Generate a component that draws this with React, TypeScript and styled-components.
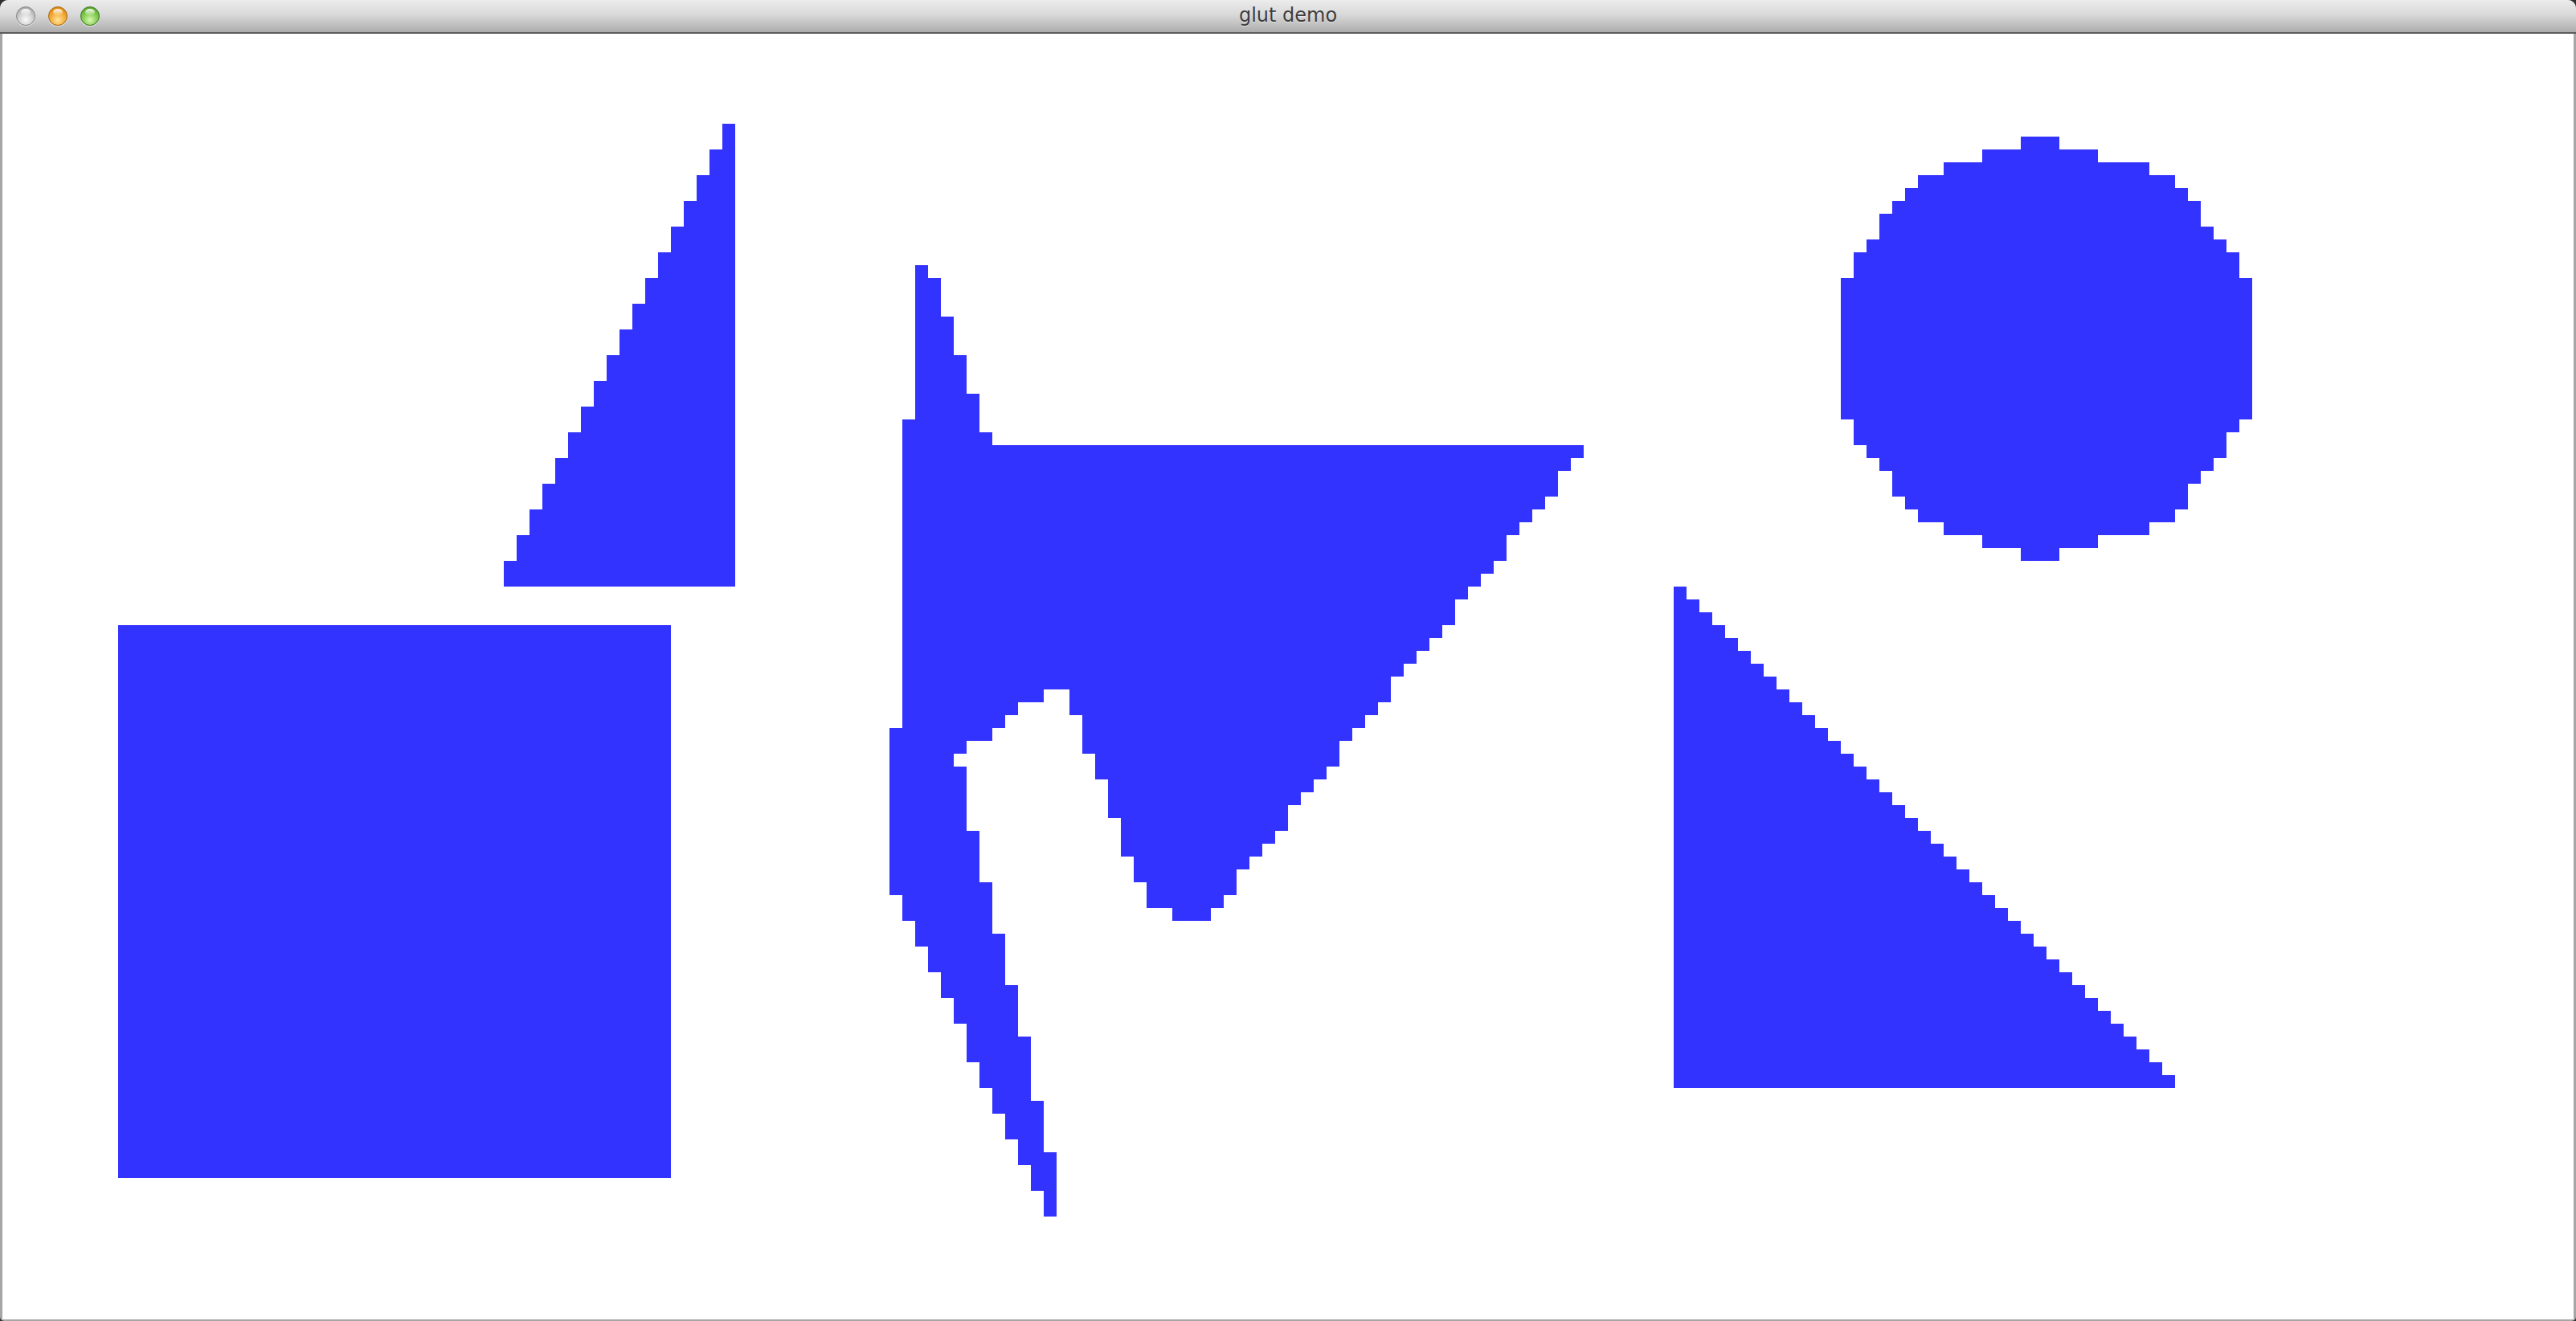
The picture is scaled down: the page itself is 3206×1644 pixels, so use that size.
import React from "react";
import styled, { createGlobalStyle } from "styled-components";

const GlobalStyle = createGlobalStyle`
  html, body {
    margin: 0;
    padding: 0;
    background: #2e2e2e;
    overflow: hidden;
  }
  #root {
    width: 3206px;
    height: 1644px;
  }
`;

const Window = styled.div`
  width: 3206px;
  height: 1644px;
  box-sizing: border-box;
  display: flex;
  flex-direction: column;
  background: #a6a6a6;
  border-radius: 10px 10px 5px 5px;
  overflow: hidden;
`;

const TitleBar = styled.div`
  height: 40px;
  flex: 0 0 auto;
  display: grid;
  grid-template-columns: 1fr auto 1fr;
  align-items: center;
  background: linear-gradient(to bottom, #ececec 0%, #d9d9d9 45%, #b9b9b9 85%, #ababab 100%);
  border-bottom: 2px solid #5c5c5c;
`;

const Lights = styled.div`
  display: flex;
  align-items: center;
  gap: 16px;
  padding-left: 20px;
`;

type LightKind = "grey" | "orange" | "green";

const lightFill: Record<LightKind, string> = {
  grey: "radial-gradient(circle at 50% 70%, #fafafa 0%, #d2d2d2 45%, #a9a9a9 80%, #8f8f8f 100%)",
  orange: "radial-gradient(circle at 50% 72%, #ffe6a0 0%, #f7b445 40%, #e38f16 75%, #b86d0a 100%)",
  green: "radial-gradient(circle at 50% 72%, #d9f7b6 0%, #8fd35c 40%, #5fae33 75%, #3a7e1d 100%)",
};

const lightBorder: Record<LightKind, string> = {
  grey: "#858585",
  orange: "#a5650c",
  green: "#3c7620",
};

const Light = styled.span<{ $kind: LightKind }>`
  position: relative;
  width: 24px;
  height: 24px;
  box-sizing: border-box;
  border-radius: 50%;
  background: ${(p) => lightFill[p.$kind]};
  border: 1px solid ${(p) => lightBorder[p.$kind]};
  box-shadow: 0 1px 1px rgba(255, 255, 255, 0.6);

  &::after {
    content: "";
    position: absolute;
    left: 5px;
    top: 2px;
    width: 12px;
    height: 8px;
    border-radius: 50%;
    background: linear-gradient(to bottom, rgba(255, 255, 255, 0.95), rgba(255, 255, 255, 0.1));
  }
`;

const Title = styled.div`
  font-family: "DejaVu Sans", "Liberation Sans", sans-serif;
  font-size: 24px;
  color: #3d3d3d;
  text-shadow: 0 1px 0 rgba(255, 255, 255, 0.5);
  padding-bottom: 2px;
  white-space: nowrap;
`;

const Body = styled.div`
  flex: 1 1 auto;
  display: flex;
  padding: 0 3px 2px 3px;
`;

const Canvas = styled.div`
  width: 3200px;
  height: 1600px;
  background: #ffffff;
  display: flex;
`;

const Scene = styled.svg`
  display: block;
  width: 3200px;
  height: 1600px;
`;

type Span = [number, number, number, number]; // row, rowCount, colStart, colEnd

const square: Span[] = [[46, 43, 9, 52]];

const upTriangle: Span[] = Array.from({ length: 18 }, (_, k) => [7 + 2 * k, 2, 56 - k, 57] as Span);

const downTriangle: Span[] = Array.from({ length: 39 }, (_, r) => [43 + r, 1, 130, 131 + r] as Span);

const circle: Span[] = [
  [8, 1, 157, 160],
  [9, 1, 154, 163],
  [10, 1, 151, 167],
  [11, 1, 149, 169],
  [12, 1, 148, 170],
  [13, 1, 147, 171],
  [14, 1, 146, 171],
  [15, 1, 146, 172],
  [16, 1, 145, 173],
  [17, 2, 144, 174],
  [19, 11, 143, 175],
  [30, 1, 144, 174],
  [31, 1, 144, 173],
  [32, 1, 145, 173],
  [33, 1, 146, 172],
  [34, 1, 147, 171],
  [35, 1, 147, 170],
  [36, 1, 148, 170],
  [37, 1, 149, 169],
  [38, 1, 151, 167],
  [39, 1, 154, 163],
  [40, 1, 157, 160],
];

const bolt: Span[] = [
  [18, 1, 71, 72],
  [19, 3, 71, 73],
  [22, 3, 71, 74],
  [25, 3, 71, 75],
  [28, 2, 71, 76],
  [30, 1, 70, 76],
  [31, 1, 70, 77],
  [32, 1, 70, 123],
  [33, 1, 70, 122],
  [34, 2, 70, 121],
  [36, 1, 70, 120],
  [37, 1, 70, 119],
  [38, 1, 70, 118],
  [39, 2, 70, 117],
  [41, 1, 70, 116],
  [42, 1, 70, 115],
  [43, 1, 70, 114],
  [44, 2, 70, 113],
  [46, 1, 70, 112],
  [47, 1, 70, 111],
  [48, 1, 70, 110],
  [49, 1, 70, 109],
  [50, 1, 70, 108],
  [51, 1, 70, 81], [51, 1, 83, 108],
  [52, 1, 70, 79], [52, 1, 83, 107],
  [53, 1, 70, 78], [53, 1, 84, 106],
  [54, 1, 69, 77], [54, 1, 84, 105],
  [55, 1, 69, 75], [55, 1, 84, 104],
  [56, 1, 69, 74], [56, 1, 85, 104],
  [57, 1, 69, 75], [57, 1, 85, 103],
  [58, 1, 69, 75], [58, 1, 86, 102],
  [59, 1, 69, 75], [59, 1, 86, 101],
  [60, 1, 69, 75], [60, 1, 86, 100],
  [61, 1, 69, 75], [61, 1, 87, 100],
  [62, 1, 69, 76], [62, 1, 87, 99],
  [63, 1, 69, 76], [63, 1, 87, 98],
  [64, 1, 69, 76], [64, 1, 88, 97],
  [65, 1, 69, 76], [65, 1, 88, 96],
  [66, 1, 69, 77], [66, 1, 89, 96],
  [67, 1, 70, 77], [67, 1, 89, 95],
  [68, 1, 70, 77], [68, 1, 91, 94],
  [69, 1, 71, 77],
  [70, 1, 71, 78],
  [71, 2, 72, 78],
  [73, 1, 73, 78],
  [74, 1, 73, 79],
  [75, 2, 74, 79],
  [77, 1, 75, 79],
  [78, 2, 75, 80],
  [80, 2, 76, 80],
  [82, 1, 77, 80],
  [83, 1, 77, 81],
  [84, 2, 78, 81],
  [86, 1, 79, 81],
  [87, 1, 79, 82],
  [88, 2, 80, 82],
  [90, 2, 81, 82],
];

const shapes: { name: string; spans: Span[] }[] = [
  { name: "square", spans: square },
  { name: "up-triangle", spans: upTriangle },
  { name: "down-triangle", spans: downTriangle },
  { name: "circle", spans: circle },
  { name: "bolt", spans: bolt },
];

const PixelShape: React.FC<{ spans: Span[] }> = ({ spans }) => (
  <g>
    {spans.map(([row, rows, c0, c1], i) => (
      <rect key={i} x={c0} y={row} width={c1 - c0} height={rows} />
    ))}
  </g>
);

export default function App() {
  return (
    <>
      <GlobalStyle />
      <Window>
        <TitleBar>
          <Lights>
            <Light $kind="grey" />
            <Light $kind="orange" />
            <Light $kind="green" />
          </Lights>
          <Title>glut demo</Title>
          <div />
        </TitleBar>
        <Body>
          <Canvas>
            <Scene viewBox="0 0 200 100" shapeRendering="crispEdges" fill="#3333ff">
              {shapes.map((s) => (
                <PixelShape key={s.name} spans={s.spans} />
              ))}
            </Scene>
          </Canvas>
        </Body>
      </Window>
    </>
  );
}
